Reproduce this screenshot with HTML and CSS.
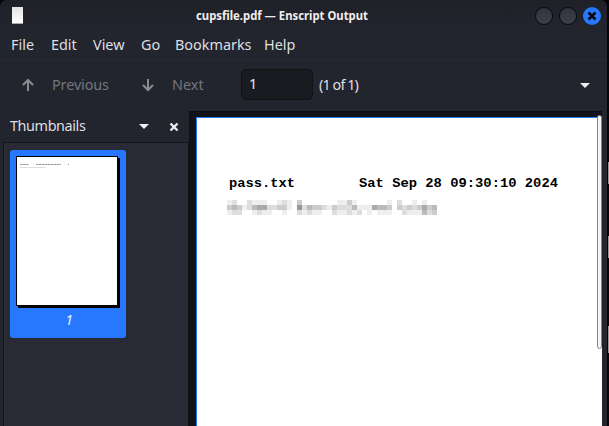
FILE: index.html
```html
<!DOCTYPE html>
<html lang="en"><head><meta charset="utf-8"><title>cupsfile.pdf — Enscript Output</title>
<link rel="stylesheet" href="styles.css"></head>
<body>
<div class="window">
<header class="titlebar"><span class="doc-icon"></span><svg class="title" width="180" height="20"><text x="4" y="14" textLength="172" lengthAdjust="spacingAndGlyphs">cupsfile.pdf — Enscript Output</text></svg>
<div class="controls"><i></i><i></i><i class="close"><svg width="18" height="18"><path d="M5.5 5.5l7 7m0-7l-7 7"/></svg></i></div></header>
<nav class="menu"><span class="m1">File</span><span class="m2">Edit</span><span class="m3">View</span><span class="m4">Go</span><span class="m5">Bookmarks</span><span class="m6">Help</span></nav>
<div class="toolbar">
<svg class="arrow" width="12" height="14"><path d="M6 13V2M1 7l5-5 5 5"/></svg><span class="prev">Previous</span>
<svg class="arrow" width="12" height="14"><path d="M6 1v11M1 7l5 5 5-5"/></svg><span class="next">Next</span>
<div class="pagebox">1</div><span class="count">(1 of 1)</span><i class="sep"></i><i class="caret"></i></div>
<main>
<aside><div class="side-head"><span>Thumbnails</span><i class="caret"></i><svg class="x" width="10" height="10"><path d="M1.5 1.5l7 7m0-7l-7 7"/></svg></div>
<div class="thumbs"><div class="thumb"><div class="mini"><div class="mini-title"><i></i><i></i><i></i></div><div class="mini-body"></div></div><span>1</span></div></div></aside>
<section class="view"><div class="page">
<svg class="heading" width="340" height="20"><text x="1" y="14" textLength="66" lengthAdjust="spacingAndGlyphs">pass.txt</text><text x="131" y="14" textLength="199" lengthAdjust="spacingAndGlyphs">Sat Sep 28 09:30:10 2024</text></svg>
<div class="mosaic" id="mosaic"></div>
</div><div class="scroll"></div></section>
</main></div>
<div class="desktop"><i></i><i></i><i></i></div>
<script src="mosaic.js"></script>
</body></html>
```
FILE: styles.css
```css
*{box-sizing:border-box}
body{margin:0;width:609px;height:426px;overflow:hidden;background:#050608;display:flex;font:14.4px "Noto Sans",sans-serif;color:#dedfe2}
i{display:block;font-style:normal}
.window{width:607px;height:426px;background:#23252e;border-radius:7px 7px 0 0;display:flex;flex-direction:column;flex:none}
.titlebar{height:31px;display:flex;align-items:center;background:linear-gradient(#1f2028,#23252e);border-radius:7px 7px 0 0;flex:none}
.doc-icon{width:11px;height:17px;margin-left:12px;background:linear-gradient(#e4e4e4,#fff);border-bottom:1px solid #aaa}
.title{margin-left:169px;font:bold 11.5px "Noto Sans",sans-serif;fill:#eee}
.controls{display:flex;gap:6px;margin-left:auto;margin-right:6px}
.controls i{width:18px;height:18px;border-radius:50%;background:linear-gradient(#333541,#3b3d4a);border:1px solid #08090c}
.controls .close{background:#2777ff;border:0}
.close path{stroke:#05070b;stroke-width:2.5;fill:none}
.menu{height:29px;display:flex;align-items:center;padding:0 0 2px 11px;border-bottom:1px solid #282a32;flex:none}
.menu span{white-space:nowrap}
.m1{width:40px}.m2{width:42px}.m3{width:48px}.m4{width:34px}.m5{width:89px}
.toolbar{height:51px;display:flex;align-items:center;flex:none;padding:0 0 2px 22px;color:#73757b}
.prev,.next,.count{padding-bottom:1px}
.arrow{fill:none;stroke:#8a8c90;stroke-width:2;flex:none}
.prev{width:90px;margin-left:18px;letter-spacing:-.1px}.next{width:69px;margin-left:18px}
.pagebox{width:72px;height:31px;background:#1a1b20;border:1px solid #111216;border-radius:5px;padding-left:7px;line-height:28px;color:#e8e8e8}
.count{margin-left:6px;width:60px;white-space:nowrap;color:#dedfe2;letter-spacing:-.9px}
.sep{width:1px;height:46px;background:#20222a;margin-left:79px}
.caret{width:10px;height:5px;background:#eee;clip-path:polygon(0 0,100% 0,50% 100%)}
.toolbar .caret{margin-left:auto;margin-right:17px;margin-top:2px}
main{display:flex;height:315px}
aside{width:189px;display:flex;flex-direction:column}
.side-head{height:31px;display:flex;align-items:center;padding-left:10px}
.side-head span{width:129px;letter-spacing:-.4px;padding-bottom:2px}
.x{margin-left:20px;stroke:#eee;stroke-width:2.4;fill:none}
.thumbs{margin-left:3px;height:284px;border:1px solid #15161b;border-bottom:0;background:#282a35;padding:7px 6px}
.thumb{width:116px;height:188px;background:#2777ff;border-radius:3px;padding:6px;text-align:center}
.mini{width:102px;height:150px;background:#fff;border:1px solid #000;box-shadow:2px 2px #000;padding:7px 3px}
.mini-title{display:flex;height:2px}
.mini-title i{height:1px;background:repeating-linear-gradient(90deg,#999 0 2px,#ccc 2px 3px)}
.mini-title i:nth-child(1){width:9px}.mini-title i:nth-child(2){width:25px;margin-left:7px}.mini-title i:nth-child(3){width:1px;margin-left:7px}
.mini-body{width:26px;height:1px;margin-top:1px;background:#ddd}
.thumb span{font-style:italic;font-size:14px;line-height:28px;color:#e8f0ff;display:block;margin-left:2px}
.view{width:413px;background:#121317;border-left:1px solid #0c0d10;border-top:1px solid #0c0d10;padding:5px 0 0 6px;position:relative}
.page{height:309px;border-left:1px solid #2777ff;border-top:1px solid #2777ff;background:#fff;padding:55px 0 0 31px}
.heading{display:block;font:bold 13px "Liberation Mono",monospace;fill:#000}
.mosaic{display:grid;grid-template-columns:repeat(42,5px);grid-auto-rows:5px;margin:7px 0 0 -1px}
.scroll{position:absolute;right:0;top:3px;width:5px;height:234px;border:1px solid #858585;border-radius:3px;background:#f5f3f5}
.desktop{width:2px;padding:162px 0 0 1px}
.desktop i{height:22px;background:#999}
.desktop i:nth-child(2){margin-top:52px}
.desktop i:nth-child(3){margin-top:68px;height:27px}
```
FILE: mosaic.js
```js
// Grey levels of the redacted line, one row per string.
const rows = [
  "edffdeeeffedefcfffffffeeceffffffefdffefeff",
  "cbcedbaaddccef9dbccdecdddbeeeabbcfcdcdcacb",
  "eddffedeeffeffdedeeffdeededfefeeeffdeeebdc"
];
const box = document.getElementById("mosaic");
for (const ch of rows.join("")) {
  const cell = document.createElement("i");
  cell.style.background = `#${ch.repeat(3)}`;
  box.append(cell);
}
```
